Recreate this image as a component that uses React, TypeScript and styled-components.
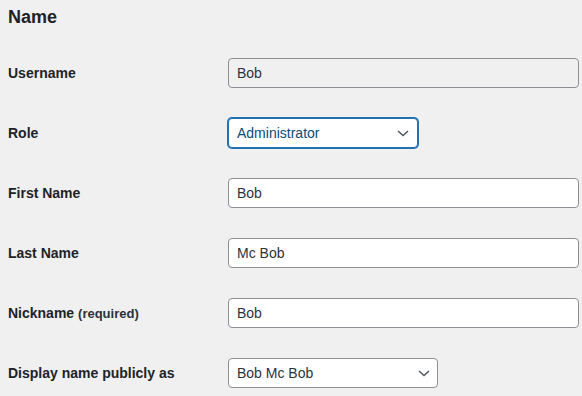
import React from "react";
import styled, { createGlobalStyle } from "styled-components";

const GlobalStyle = createGlobalStyle`
  html, body {
    margin: 0;
    padding: 0;
    background: #f0f0f1;
  }
  body {
    font-family: "Liberation Sans", Arial, sans-serif;
    color: #1d2327;
    font-size: 14px;
  }
`;

const Page = styled.div`
  padding: 0 0 0 8px;
`;

const Heading = styled.h2`
  margin: 6px 0 14px;
  font-size: 18px;
  line-height: 23px;
  font-weight: 700;
  color: #1d2327;
`;

const FormTable = styled.div`
  display: grid;
  grid-template-columns: 210px 1fr;
`;

const Label = styled.label`
  padding: 21px 0 19px;
  font-size: 14px;
  line-height: 18px;
  font-weight: 700;
  color: #1d2327;
`;

const Note = styled.span`
  font-size: 13px;
  font-weight: 700;
  color: #2c3338;
`;

const Field = styled.div`
  padding: 15px 10px;
  display: flex;
  align-items: center;
`;

const TextInput = styled.input<{ $readOnlyLook?: boolean }>`
  box-sizing: border-box;
  width: 351px;
  height: 30px;
  margin: 0;
  padding: 0 8px;
  font-family: "Liberation Sans", Arial, sans-serif;
  font-size: 14px;
  line-height: 28px;
  color: #2c3338;
  background: ${(p) => (p.$readOnlyLook ? "#f0f0f1" : "#ffffff")};
  border: 1px solid #8c8f94;
  border-radius: 4px;
  outline: none;
`;

const SelectWrap = styled.div`
  position: relative;
  display: inline-flex;
`;

const Select = styled.select<{ $focused?: boolean }>`
  box-sizing: border-box;
  appearance: none;
  -webkit-appearance: none;
  height: 30px;
  margin: 0;
  padding: 0 24px 0 8px;
  font-family: "Liberation Sans", Arial, sans-serif;
  font-size: 14px;
  line-height: 28px;
  color: ${(p) => (p.$focused ? "#0a4b78" : "#2c3338")};
  background: #ffffff;
  border: 1px solid ${(p) => (p.$focused ? "#2271b1" : "#8c8f94")};
  box-shadow: ${(p) => (p.$focused ? "0 0 0 1px #2271b1" : "none")};
  border-radius: 4px;
  outline: none;
`;

const Chevron = styled.svg<{ $right: number }>`
  position: absolute;
  top: 12px;
  right: ${(p) => p.$right}px;
  width: 12px;
  height: 7px;
  pointer-events: none;
`;

const ChevronIcon = ({ right }: { right: number }) => (
  <Chevron $right={right} viewBox="0 0 12 7">
    <path d="M1 1l5 4.5L11 1" fill="none" stroke="#50575e" strokeWidth="1.5" />
  </Chevron>
);

export default function App() {
  return (
    <>
      <GlobalStyle />
      <Page>
        <Heading>Name</Heading>
        <FormTable>
          <Label htmlFor="user_login">Username</Label>
          <Field>
            <TextInput id="user_login" $readOnlyLook readOnly defaultValue="Bob" />
          </Field>

          <Label htmlFor="role">Role</Label>
          <Field>
            <SelectWrap>
              <Select id="role" $focused defaultValue="administrator" style={{ width: 190 }}>
                <option value="subscriber">Subscriber</option>
                <option value="contributor">Contributor</option>
                <option value="author">Author</option>
                <option value="editor">Editor</option>
                <option value="administrator">Administrator</option>
              </Select>
              <ChevronIcon right={9} />
            </SelectWrap>
          </Field>

          <Label htmlFor="first_name">First Name</Label>
          <Field>
            <TextInput id="first_name" defaultValue="Bob" />
          </Field>

          <Label htmlFor="last_name">Last Name</Label>
          <Field>
            <TextInput id="last_name" defaultValue="Mc Bob" />
          </Field>

          <Label htmlFor="nickname">
            Nickname <Note>(required)</Note>
          </Label>
          <Field>
            <TextInput id="nickname" defaultValue="Bob" />
          </Field>

          <Label htmlFor="display_name">Display name publicly as</Label>
          <Field>
            <SelectWrap>
              <Select id="display_name" defaultValue="Bob Mc Bob" style={{ width: 210 }}>
                <option>Bob</option>
                <option>Bob Mc Bob</option>
                <option>Mc Bob Bob</option>
                <option>Mc Bob</option>
              </Select>
              <ChevronIcon right={8} />
            </SelectWrap>
          </Field>
        </FormTable>
      </Page>
    </>
  );
}
